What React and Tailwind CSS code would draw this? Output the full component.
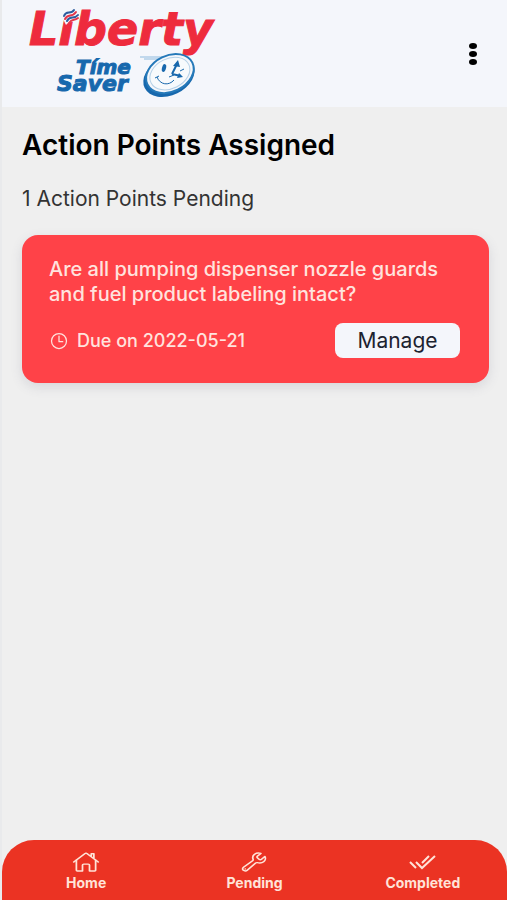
import { IoHomeOutline, IoBuildOutline, IoTimeOutline } from 'react-icons/io5';

const points = [
    {
        id: 1,
        question: "Are all pumping dispenser nozzle guards and fuel product labeling intact?",
        due: "2022-05-21"
    }
];

function Logo() {
    return (
        <svg viewBox="0 -6 210 106" className="w-[210px] h-[106px]" role="img" aria-label="Liberty Time Saver">
            {/* Wordmark */}
            <g fontFamily="'DejaVu Sans', sans-serif" fontWeight="700" fontStyle="italic" strokeLinejoin="miter">
                <text x="3" y="38" fontSize="46" fill="#ee2b3d" stroke="#ee2b3d" strokeWidth="1">Lıberty</text>
                <text x="50" y="67" fontSize="20" fill="#1768ad" stroke="#1768ad" strokeWidth="1">Tíme</text>
                <text x="31" y="84" fontSize="22" fill="#1768ad" stroke="#1768ad" strokeWidth="1">Saver</text>
            </g>

            {/* Flame above the i */}
            <path d="M36 10q1-5 7-5 5 0 8-3l3 7q-2 6-8 6-4 0-6 3z" fill="#f4f6fb" />
            <g fill="none" strokeWidth="2" strokeLinecap="round">
                <path d="M38 9c2-6 7-1 10-6" stroke="#2c5c9e" />
                <path d="M39 12c3-6 7-1 11-7" stroke="#e5364a" />
                <path d="M41 14c3-6 7-1 11-6" stroke="#2c5c9e" />
                <path d="M43 16c3-5 5-2 9-5" stroke="#e5364a" />
            </g>

            {/* Clock face */}
            <path d="M114 50h26M118 52h18" stroke="#8ebade" strokeWidth="1" />
            <g transform="rotate(-26 143 67)">
                <ellipse cx="142" cy="69" rx="27" ry="19" fill="#1768ad" />
                <ellipse cx="144" cy="67" rx="25" ry="18" fill="#f5f7fb" stroke="#2579b9" strokeWidth="2" />
                <ellipse cx="144" cy="67" rx="21" ry="15" fill="#f7fafc" stroke="#b5d1e7" strokeWidth="1" />
            </g>
            <ellipse cx="138" cy="61" rx="2" ry="4" fill="#1768ad" transform="rotate(15 138 61)" />
            <path d="M146 67l5-10m-5 10 9 2" stroke="#1768ad" strokeWidth="2" />
            <path d="M152 53l-5 6 7 1zM153 66l4 4-6 1z" fill="#1768ad" />
            <path d="M131 70c3 8 12 9 17 3M129 71l4-2M143 70l5-2M154 64l4-2" fill="none" stroke="#1768ad" strokeWidth="1" />
        </svg>
    );
}

function DoubleCheck(props) {
    return (
        <svg viewBox="0 0 28 22" fill="none" stroke="currentColor" strokeWidth="2" {...props}>
            <path d="M1 11l6 6M7 11l6 6L26 5M13 12l7-7" />
        </svg>
    );
}

const tabs = [
    { label: "Home", icon: IoHomeOutline },
    { label: "Pending", icon: IoBuildOutline },
    { label: "Completed", icon: DoubleCheck }
];

export default function App() {
    return (
        <div className="min-h-screen flex flex-col bg-[#efefef] border-l-2 border-[#e9eaec] font-['Inter',sans-serif] text-black">
            {/* HEADER */}
            <header className="h-[107px] bg-[#f4f6fb] flex items-center justify-between pl-6 pr-5">
                <Logo />
                <button aria-label="More options" className="w-7 h-10 flex items-center justify-center">
                    <svg viewBox="0 0 8 24" className="w-2 h-6" fill="currentColor">
                        <ellipse cx="4" cy="4" rx="4" ry="3" />
                        <ellipse cx="4" cy="12" rx="4" ry="3" />
                        <ellipse cx="4" cy="20" rx="4" ry="3" />
                    </svg>
                </button>
            </header>

            {/* MAIN CONTENT */}
            <main className="flex-1 pl-5 pr-[18px] pt-5">
                <h1 className="text-[28px] leading-9 font-semibold">Action Points Assigned</h1>
                <p className="mt-5 text-[21px] leading-8 text-[#333333]">{points.length} Action Points Pending</p>

                {points.map((point) => (
                    <div key={point.id} className="mt-5 rounded-2xl bg-[#ff4248] shadow-[0_4px_12px_rgba(80,80,110,0.15)] pl-[27px] pr-[29px] pt-[22px] pb-[25px] text-[#ffe3de]">
                        <p className="text-xl leading-[25px] font-medium">{point.question}</p>
                        <div className="mt-4 flex items-center justify-between">
                            <div className="flex items-center gap-2 text-lg font-medium">
                                <IoTimeOutline size={20} /> Due on {point.due}
                            </div>
                            <button className="w-[125px] h-[35px] rounded-lg bg-[#f4f6fb] text-[21px] text-[#1c2330]">
                                Manage
                            </button>
                        </div>
                    </div>
                ))}
            </main>

            {/* BOTTOM NAV */}
            <nav className="h-15 rounded-t-[32px] bg-[#eb3323] grid grid-cols-3 text-[#ffe3d8]">
                {tabs.map(({ label, icon: Icon }) => (
                    <a key={label} href="#" className="flex flex-col items-center pt-[11px]">
                        <Icon className="w-7 h-[22px]" preserveAspectRatio="none" />
                        <span className="text-sm leading-5 font-bold">{label}</span>
                    </a>
                ))}
            </nav>
        </div>
    );
}
